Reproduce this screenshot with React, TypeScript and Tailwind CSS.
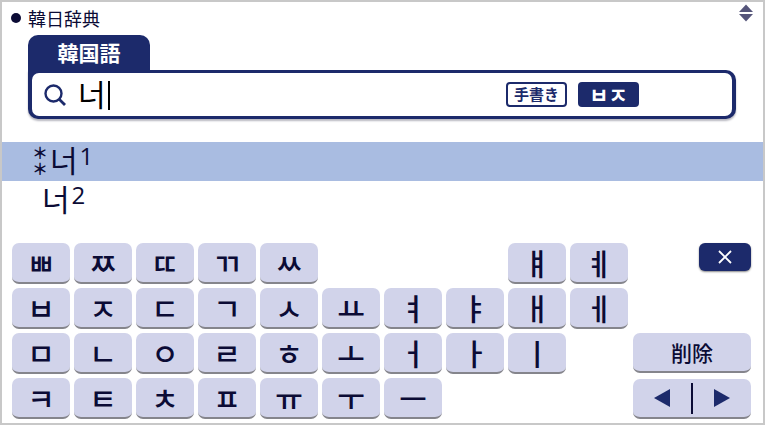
import { useState } from 'react'

interface Entry {
  mark: string
  word: string
  sense: number
}

const entries: Entry[] = [
  { mark: '＊＊', word: '너', sense: 1 },
  { mark: '', word: '너', sense: 2 },
]

// One string per keyboard row, a space leaves the cell empty
const rows = ['ㅃㅉㄸㄲㅆ   ㅒㅖ', 'ㅂㅈㄷㄱㅅㅛㅕㅑㅐㅔ', 'ㅁㄴㅇㄹㅎㅗㅓㅏㅣ ', 'ㅋㅌㅊㅍㅠㅜㅡ   ']

export default function App() {
  const [query, setQuery] = useState('너')
  const [selected, setSelected] = useState(0)

  return (
    <div className="min-h-screen flex flex-col justify-between border-2 border-[#c8c8c8] bg-white pb-1 font-['Noto_Sans_CJK_JP',sans-serif] text-[#0b0b35]">
      <div>
        <header className="flex items-start justify-between pl-[9px] pr-[10px]">
          <div className="flex items-center gap-[7px] pt-1">
            <span className="size-[10px] rounded-full bg-[#0b0b35]" />
            <h1 className="text-[18px] leading-6">韓日辞典</h1>
          </div>
          <button aria-label="スクロール" className="pt-[2px]">
            <svg width="14" height="18" viewBox="0 0 14 18" fill="#55557a">
              <path d="M7 0.5L14 8H0Z" />
              <path d="M0 10H14L7 17.5Z" />
            </svg>
          </button>
        </header>

        <div className="ml-[26px] mr-[27px] mt-[5px]">
          <label htmlFor="query" className="flex h-[35px] w-[122px] items-center justify-center rounded-t-[10px] bg-[#1c2a6b] pb-[2px] text-[21px] font-bold leading-8 text-white">
            韓国語
          </label>
          <div className="rounded-[10px] rounded-tl-none bg-[#1c2a6b] px-1 py-[3px] shadow-[0_2px_2px_#b8b8c0]">
            <div className="flex h-[43px] items-center rounded-[7px] bg-white pl-3 pr-[93px]">
              <SearchIcon />
              <div className="relative ml-3 flex-1">
                <input
                  id="query"
                  value={query}
                  onChange={(e) => setQuery(e.target.value)}
                  className="block h-10 w-full bg-transparent pb-[2px] font-['Noto_Sans_CJK_KR',sans-serif] text-[30px] text-black outline-none"
                />
                <span className="absolute left-[30px] top-[6px] h-[29px] w-[2px] bg-black" />
              </div>
              <button className="h-[25px] w-[61px] rounded-[4px] border-2 border-[#1c2a6b] pb-[2px] text-[15px] font-bold leading-5 text-[#1c2a6b]">
                手書き
              </button>
              <button className="ml-[11px] h-[25px] w-[61px] rounded-[4px] bg-[#1c2a6b] pb-[2px] font-['Noto_Sans_CJK_KR',sans-serif] text-[21px] font-bold leading-5 text-white">
                ㅂㅈ
              </button>
            </div>
          </div>
        </div>

        <ul className="mt-[23px] font-['Noto_Sans_CJK_KR',sans-serif]">
          {entries.map((entry, i) => (
            <li key={entry.sense}>
              <button
                onClick={() => setSelected(i)}
                className={`flex h-[39px] w-full items-start text-left ${entry.mark ? 'pl-[30px]' : 'pl-[40px]'} ${selected === i ? 'bg-[#a9bce1]' : ''}`}
              >
                {entry.mark && (
                  <span className="w-[18px] pt-[2px] text-[16px] font-bold leading-4 break-all">{entry.mark}</span>
                )}
                <span className="text-[30px] leading-[34px]">{entry.word}</span>
                <span className="pl-[2px] font-['Open_Sans',sans-serif] text-[24px] leading-7">{entry.sense}</span>
              </button>
            </li>
          ))}
        </ul>
      </div>

      <div className="flex gap-[5px] pl-[10px] pr-3">
        <div className="grid flex-1 grid-cols-10 gap-1">
          {rows.flatMap((row, r) =>
            row.split('').map((jamo, c) =>
              jamo === ' ' ? (
                <span key={`${r}-${c}`} />
              ) : (
                <Key key={`${r}-${c}`} jamo={jamo} onPress={() => setQuery(query + jamo)} />
              )
            )
          )}
        </div>
        <div className="flex w-[118px] flex-col items-end">
          <button
            aria-label="閉じる"
            className="flex h-7 w-[52px] items-center justify-center rounded-[6px] bg-[#1c2a6b] shadow-[0_1px_2px_#888]"
          >
            <svg width="14" height="14" viewBox="0 0 14 14" stroke="#fff" strokeWidth="1.8">
              <path d="M1 1L13 13M13 1L1 13" />
            </svg>
          </button>
          <button
            onClick={() => setQuery(query.slice(0, -1))}
            className="mt-auto h-10 w-full rounded-[7px] border-b-2 border-[#85858c] bg-[#d1d3ea] text-[21px] font-medium leading-8"
          >
            削除
          </button>
          <div className="mt-[6px] flex h-10 w-full items-center rounded-[7px] border-b-2 border-[#85858c] bg-[#d1d3ea]">
            <button aria-label="左へ" className="flex h-full flex-1 items-center justify-center">
              <svg width="16" height="18" viewBox="0 0 16 18" fill="#1c2a6b">
                <path d="M16 0V18L0 9Z" />
              </svg>
            </button>
            <span className="h-[31px] w-[2px] bg-[#0b0b35]" />
            <button aria-label="右へ" className="flex h-full flex-1 items-center justify-center">
              <svg width="16" height="18" viewBox="0 0 16 18" fill="#1c2a6b">
                <path d="M0 0V18L16 9Z" />
              </svg>
            </button>
          </div>
        </div>
      </div>
    </div>
  )
}

function SearchIcon() {
  return (
    <svg width="22" height="22" viewBox="0 0 22 22" fill="none" stroke="#1c2a6b" strokeWidth="2.4">
      <circle cx="9.5" cy="9.5" r="8" />
      <path d="M15.2 15.2L21 21" strokeWidth="2.8" />
    </svg>
  )
}

function Key({ jamo, onPress }: { jamo: string; onPress: () => void }) {
  return (
    <button
      onClick={onPress}
      className="h-[41px] rounded-[7px] border-b-2 border-[#85858c] bg-[#d1d3ea] pb-[2px] font-['Noto_Sans_CJK_KR',sans-serif] text-[30px] font-medium leading-8"
    >
      {jamo}
    </button>
  )
}
